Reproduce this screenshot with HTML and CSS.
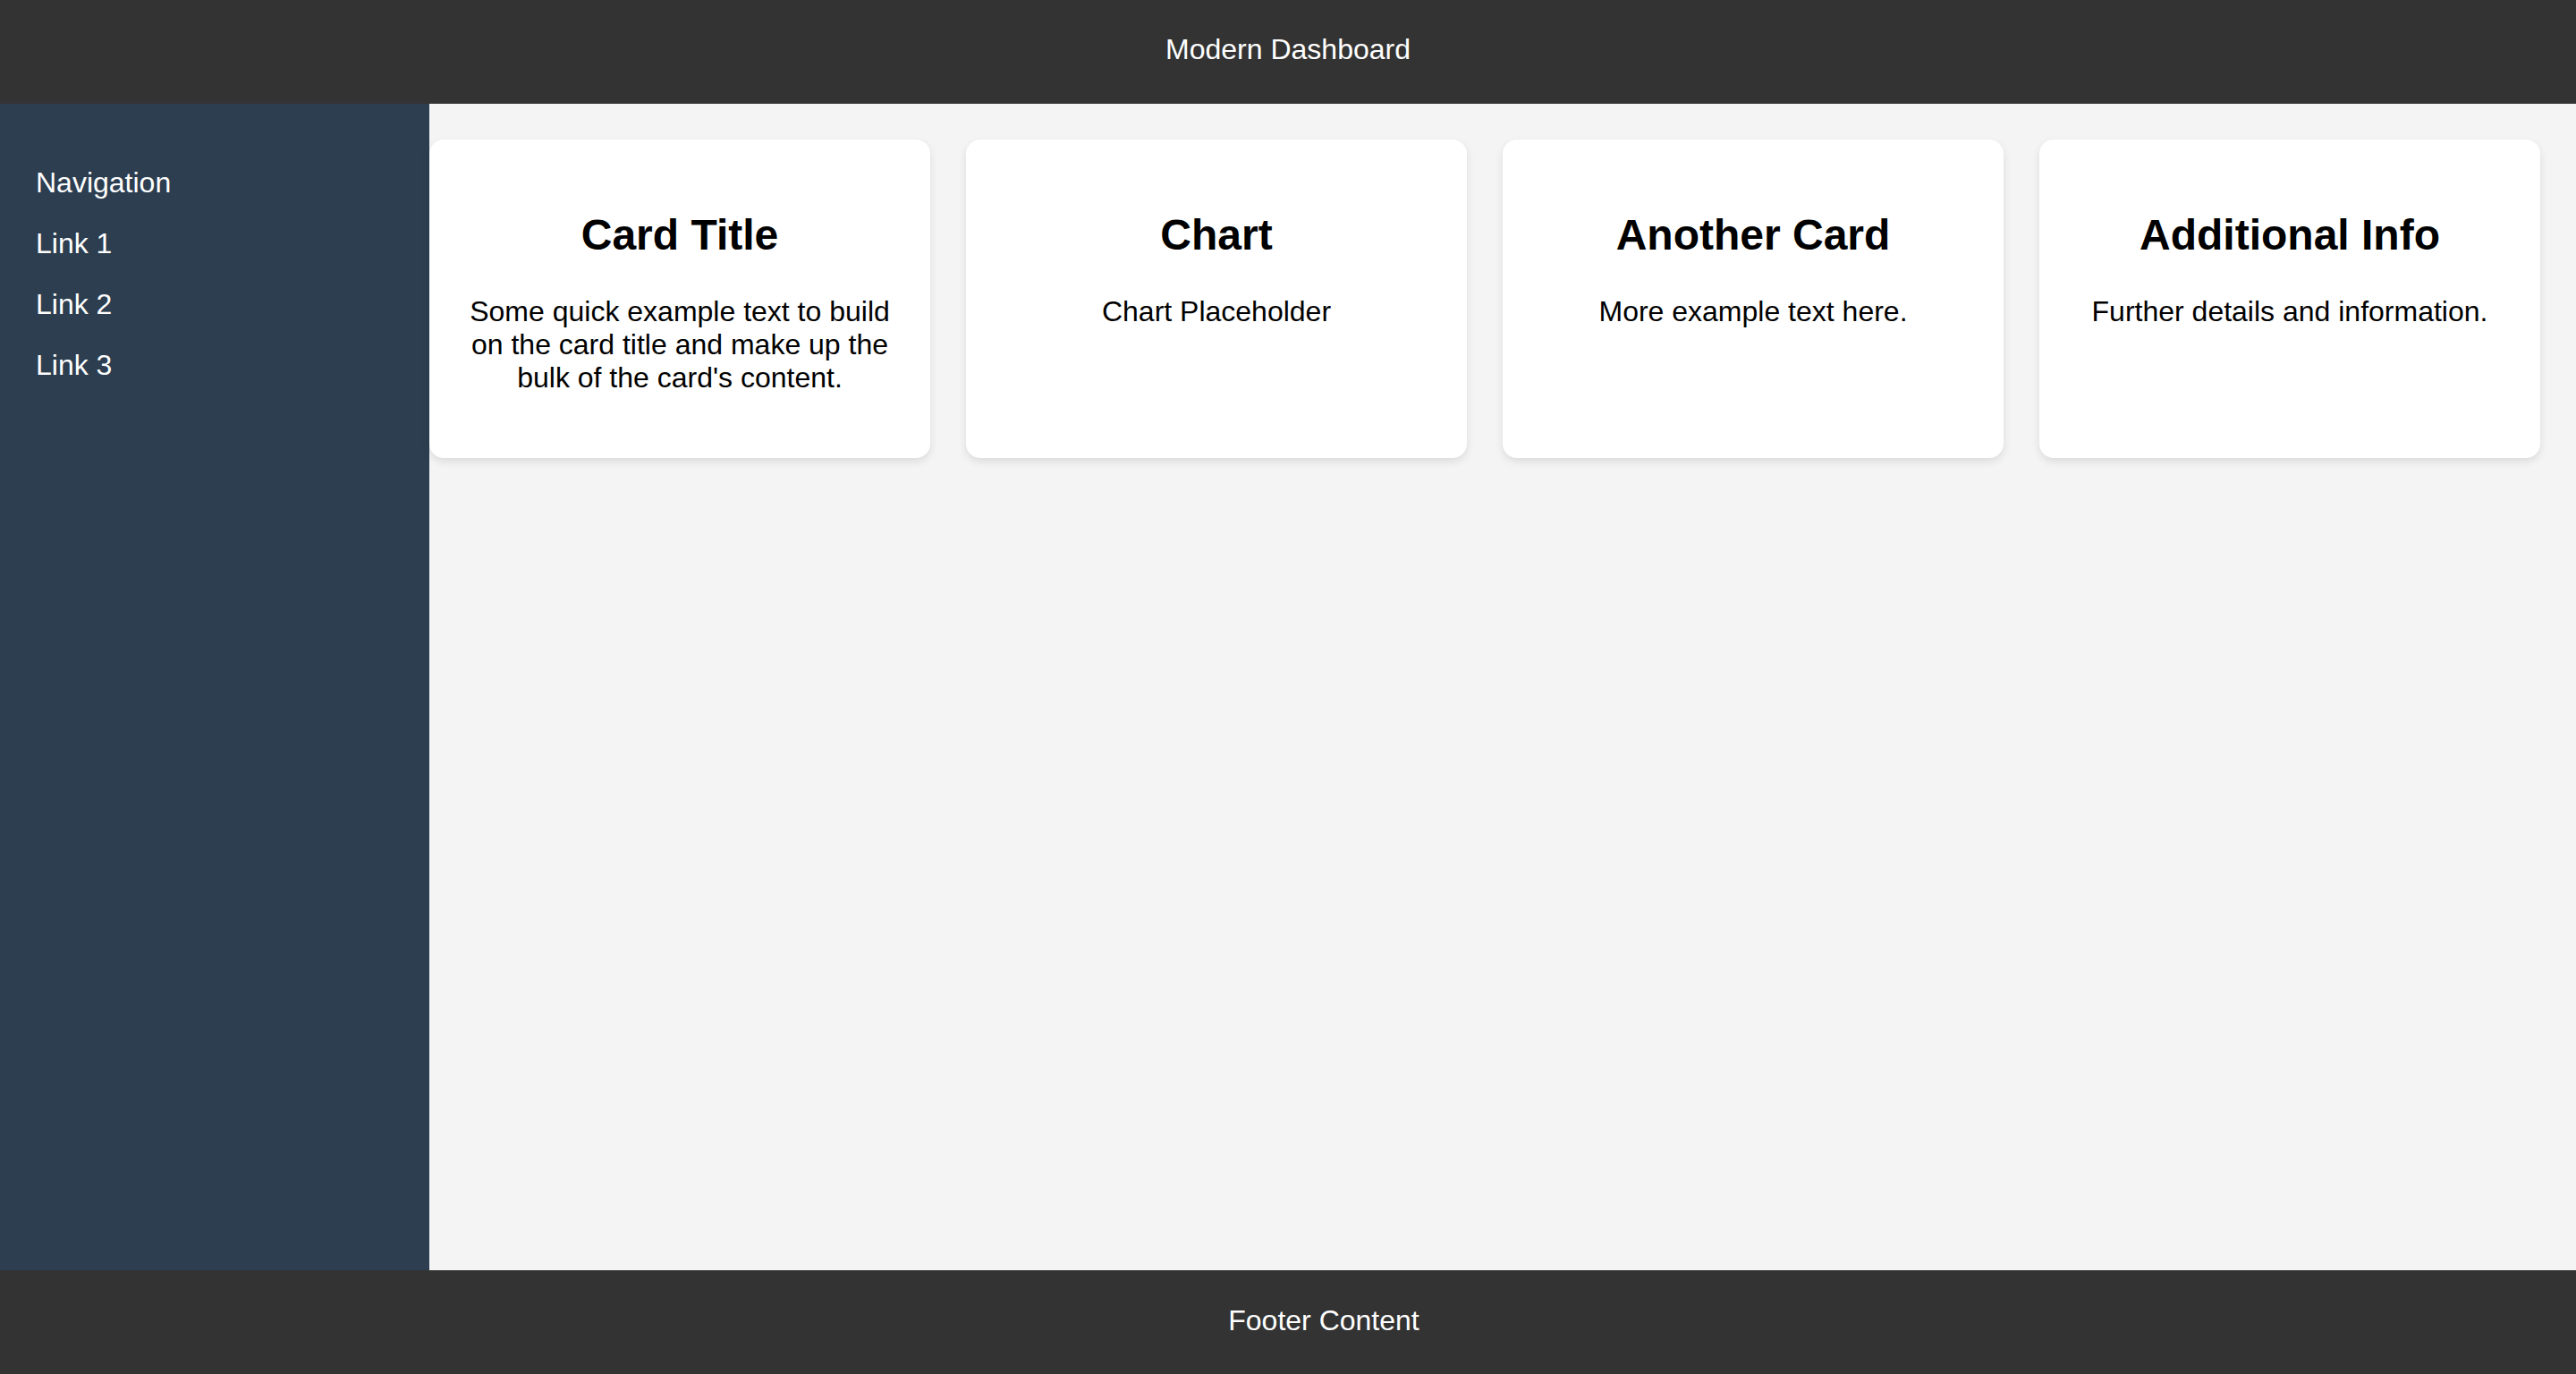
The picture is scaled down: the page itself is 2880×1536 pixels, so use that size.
FILE: index.html
```html
<!DOCTYPE html>
<html lang="en">
<head>
<meta charset="utf-8">
<title>Modern Dashboard</title>
<link rel="stylesheet" href="styles.css">
</head>
<body>
<div class="page">
  <header class="topbar">Modern Dashboard</header>
  <div class="middle">
    <nav class="sidebar">
      <ul class="nav-list">
        <li class="nav-item">Navigation</li>
        <li class="nav-item">Link 1</li>
        <li class="nav-item">Link 2</li>
        <li class="nav-item">Link 3</li>
      </ul>
    </nav>
    <main class="content">
      <div class="cards">
        <section class="card">
          <h2 class="card-title">Card Title</h2>
          <p class="card-text">Some quick example text to build on the card title and make up the bulk of the card's content.</p>
        </section>
        <section class="card">
          <h2 class="card-title">Chart</h2>
          <p class="card-text">Chart Placeholder</p>
        </section>
        <section class="card">
          <h2 class="card-title">Another Card</h2>
          <p class="card-text">More example text here.</p>
        </section>
        <section class="card">
          <h2 class="card-title">Additional Info</h2>
          <p class="card-text">Further details and information.</p>
        </section>
      </div>
    </main>
  </div>
  <footer class="footer">Footer Content</footer>
</div>
</body>
</html>
```

FILE: styles.css
```css
html, body {
  margin: 0;
  padding: 0;
}
body {
  font-family: "Liberation Sans", Arial, sans-serif;
  font-size: 32px;
  color: #000;
  background: #f4f4f4;
}
.page {
  display: flex;
  flex-direction: column;
  height: 100vh;
}
.topbar {
  flex: 0 0 116px;
  background: #333333;
  color: #ffffff;
  display: flex;
  align-items: center;
  justify-content: center;
  font-size: 32px;
  padding-bottom: 6px;
  box-sizing: border-box;
}
.middle {
  flex: 1 1 auto;
  display: flex;
  min-height: 0;
}
.sidebar {
  flex: 0 0 480px;
  background: #2c3e50;
  color: #ffffff;
  padding: 70px 40px 40px;
  box-sizing: border-box;
}
.nav-list {
  list-style: none;
  margin: 0;
  padding: 0;
  display: flex;
  flex-direction: column;
  gap: 31px;
}
.nav-item {
  font-size: 32px;
  line-height: 37px;
}
.content {
  flex: 1 1 auto;
  padding: 40px 40px 40px 0;
  background: #f4f4f4;
}
.cards {
  display: grid;
  grid-template-columns: repeat(4, 1fr);
  gap: 40px;
  align-items: stretch;
}
.card {
  background: #ffffff;
  border-radius: 16px;
  box-shadow: 0 4px 10px rgba(0, 0, 0, 0.1);
  padding: 40px;
  text-align: center;
  min-height: 355px;
  box-sizing: border-box;
}
.card-title {
  font-size: 48px;
  font-weight: bold;
  margin: 39px 0 40px;
  line-height: 55px;
}
.card-text {
  font-size: 32px;
  line-height: 36.8px;
  margin: 0 0 32px;
}
.footer {
  flex: 0 0 116px;
  background: #333333;
  color: #ffffff;
  display: flex;
  align-items: center;
  justify-content: center;
  padding-left: 80px;
  padding-bottom: 4px;
  box-sizing: border-box;
  font-size: 32px;
}
```
